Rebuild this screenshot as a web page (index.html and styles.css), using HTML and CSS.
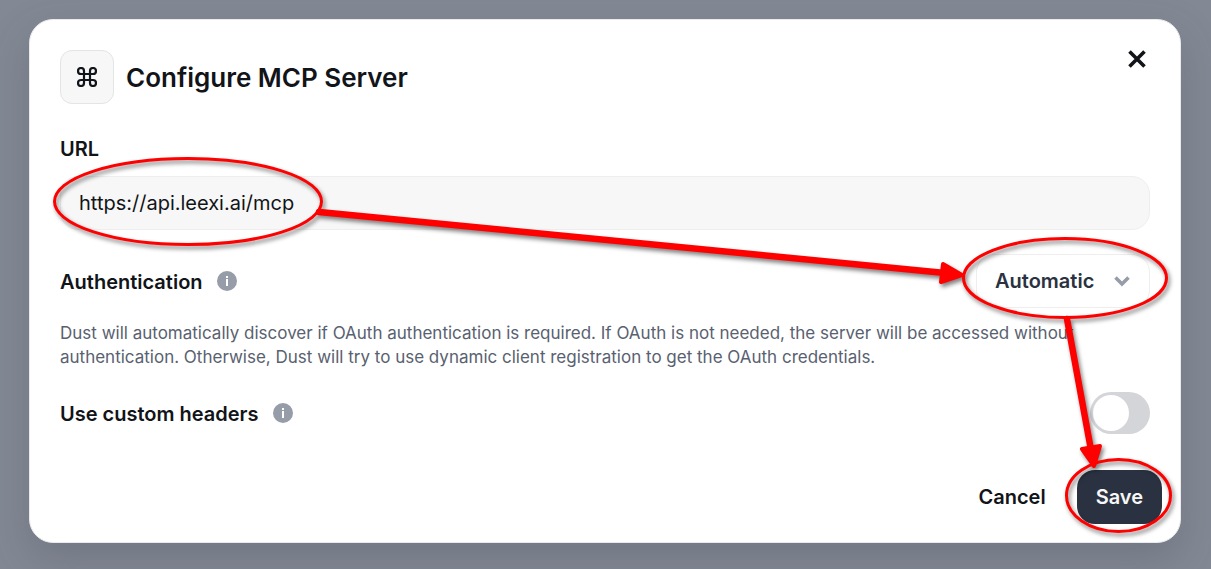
FILE: index.html
```html
<!DOCTYPE html>
<html lang="en">
<head>
    <meta charset="UTF-8">
    <meta name="viewport" content="width=device-width, initial-scale=1.0">
    <title>Configure MCP Server</title>
    <link rel="stylesheet" href="styles.css">
</head>
<body>
    <form class="dialog" role="dialog" aria-labelledby="dialogTitle">
        <div class="header">
            <div class="server-icon">
                <svg width="20" height="20" viewBox="0 0 20 20" fill="none" stroke="currentColor" stroke-width="2.200">
                    <path d="M7 7V4a3 3 0 1 0-3 3h12a3 3 0 1 0-3-3v12a3 3 0 1 0 3-3H4a3 3 0 1 0 3 3z"/>
                </svg>
            </div>
            <h1 class="title" id="dialogTitle">Configure MCP Server</h1>
            <button type="button" class="close-btn" aria-label="Close">
                <svg width="18" height="18" viewBox="0 0 18 18" fill="none" stroke="currentColor" stroke-width="3.600">
                    <path d="M1.500 1.500l15 15M16.500 1.500l-15 15"/>
                </svg>
            </button>
        </div>

        <div class="field">
            <label class="label" for="serverUrl">URL</label>
            <input type="text" class="text-input" id="serverUrl" value="https://api.leexi.ai/mcp">
        </div>

        <div class="row">
            <label class="label" for="authMode">Authentication</label>
            <svg class="info" viewBox="0 0 20 20">
                <circle cx="10" cy="10" r="10"/>
                <path d="M9 5h2v2H9zM9 8h2v7H9z" fill="#fff"/>
            </svg>
            <div class="select-wrap">
                <select class="select" id="authMode">
                    <option>Automatic</option>
                </select>
                <svg class="chevron" width="16" height="11" viewBox="0 0 16 11" fill="none" stroke="currentColor" stroke-width="3.600">
                    <path d="M1.500 1.500L8 8l6.500-6.500"/>
                </svg>
            </div>
        </div>

        <p class="description">Dust will automatically discover if OAuth authentication is required. If OAuth is not needed, the server will be accessed without authentication. Otherwise, Dust will try to use dynamic client registration to get the OAuth credentials.</p>

        <div class="row">
            <label class="label" for="customHeaders">Use custom headers</label>
            <svg class="info" viewBox="0 0 20 20">
                <circle cx="10" cy="10" r="10"/>
                <path d="M9 5h2v2H9zM9 8h2v7H9z" fill="#fff"/>
            </svg>
            <input type="checkbox" class="toggle" id="customHeaders">
        </div>

        <div class="footer">
            <button type="button" class="btn btn-ghost">Cancel</button>
            <button type="submit" class="btn btn-primary">Save</button>
        </div>
    </form>

    <!-- hand-drawn markers over the dialog -->
    <svg class="markers" viewBox="0 0 1211 569" fill="none" stroke="#f00" stroke-width="3" aria-hidden="true">
        <ellipse cx="188" cy="201.500" rx="133.500" ry="43"/>
        <ellipse cx="1065" cy="278" rx="101.500" ry="39.500"/>
        <ellipse cx="1118.500" cy="495.500" rx="52" ry="36"/>
        <path d="M319 212L945 273M1067 319L1091 450" stroke-width="6.500" stroke-linecap="round"/>
        <path d="M943 264L962 275L941 282zM1082 449L1100 446L1094 466z" fill="#f00" stroke-width="4" stroke-linejoin="round"/>
    </svg>
</body>
</html>
```

FILE: styles.css
```css
* {
    box-sizing: border-box;
}

body {
    position: relative;
    margin: 0;
    padding: 19px 30px 26px 29px;
    font-family: Inter, "Liberation Sans", sans-serif;
    background: #838994;
    color: #111418;
}

.dialog {
    position: relative;
    padding: 30px;
    padding-bottom: 18px;
    background: #fff;
    border: 1px solid #e9eaec;
    border-radius: 24px;
    box-shadow: 0 16px 40px rgba(60, 65, 80, 0.25);
}

.header {
    display: flex;
    align-items: center;
    gap: 12px;
    margin-bottom: 28px;
}

.server-icon {
    display: flex;
    align-items: center;
    justify-content: center;
    width: 54px;
    height: 54px;
    background: #f7f7f7;
    border: 1px solid #e3e4e6;
    border-radius: 12px;
}

.title {
    margin: 0;
    padding-top: 2px;
    font-size: 26px;
    font-weight: 600;
    line-height: 32px;
}

.close-btn {
    position: absolute;
    top: 26px;
    right: 30px;
    display: flex;
    padding: 4px;
    background: none;
    border: none;
    color: inherit;
    cursor: pointer;
}

.field {
    display: flex;
    flex-direction: column;
    gap: 12px;
    margin-bottom: 24px;
}

.label {
    padding-top: 2px;
    font-size: 20px;
    font-weight: 600;
    line-height: 30px;
}

.text-input {
    width: 100%;
    height: 54px;
    padding: 0 18px;
    font: 400 20px Inter, sans-serif;
    color: #111418;
    background: #f7f7f7;
    border: 1px solid #eeeeef;
    border-radius: 18px;
}

.row {
    display: flex;
    align-items: center;
    gap: 14px;
}

.info {
    width: 20px;
    height: 20px;
    fill: #969ca8;
}

.select-wrap {
    position: relative;
    margin-left: auto;
}

.select {
    appearance: none;
    width: 174px;
    height: 54px;
    padding: 0 18px;
    font: 600 20px Inter, sans-serif;
    color: #2a3241;
    background: #fff;
    border: 1px solid #eeeeef;
    border-radius: 18px;
}

.chevron {
    position: absolute;
    top: 22px;
    right: 20px;
    color: #969ca8;
    pointer-events: none;
}

.description {
    margin: 13px 0 23px;
    font-size: 17px;
    line-height: 24px;
    color: #596170;
}

.toggle {
    appearance: none;
    display: flex;
    width: 60px;
    height: 42px;
    margin: 0 0 0 auto;
    padding: 3px;
    background: #d3d5d9;
    border-radius: 21px;
    cursor: pointer;
}

.toggle::before {
    content: "";
    width: 36px;
    height: 36px;
    background: #fff;
    border-radius: 50%;
}

.toggle:checked {
    justify-content: flex-end;
    background: #2a3241;
}

.footer {
    display: flex;
    justify-content: flex-end;
    gap: 12px;
    margin-top: 36px;
    margin-right: -12px;
}

.btn {
    height: 54px;
    padding: 0 19px;
    font: 600 20px Inter, sans-serif;
    border: none;
    border-radius: 18px;
    cursor: pointer;
}

.btn-ghost {
    background: none;
    color: #111418;
}

.btn-primary {
    background: #2a3241;
    color: #f7f7f7;
}

.markers {
    position: absolute;
    top: 0;
    left: 0;
    width: 100%;
    filter: drop-shadow(2px 3px 2px rgba(0, 0, 0, 0.5));
    pointer-events: none;
}
```
